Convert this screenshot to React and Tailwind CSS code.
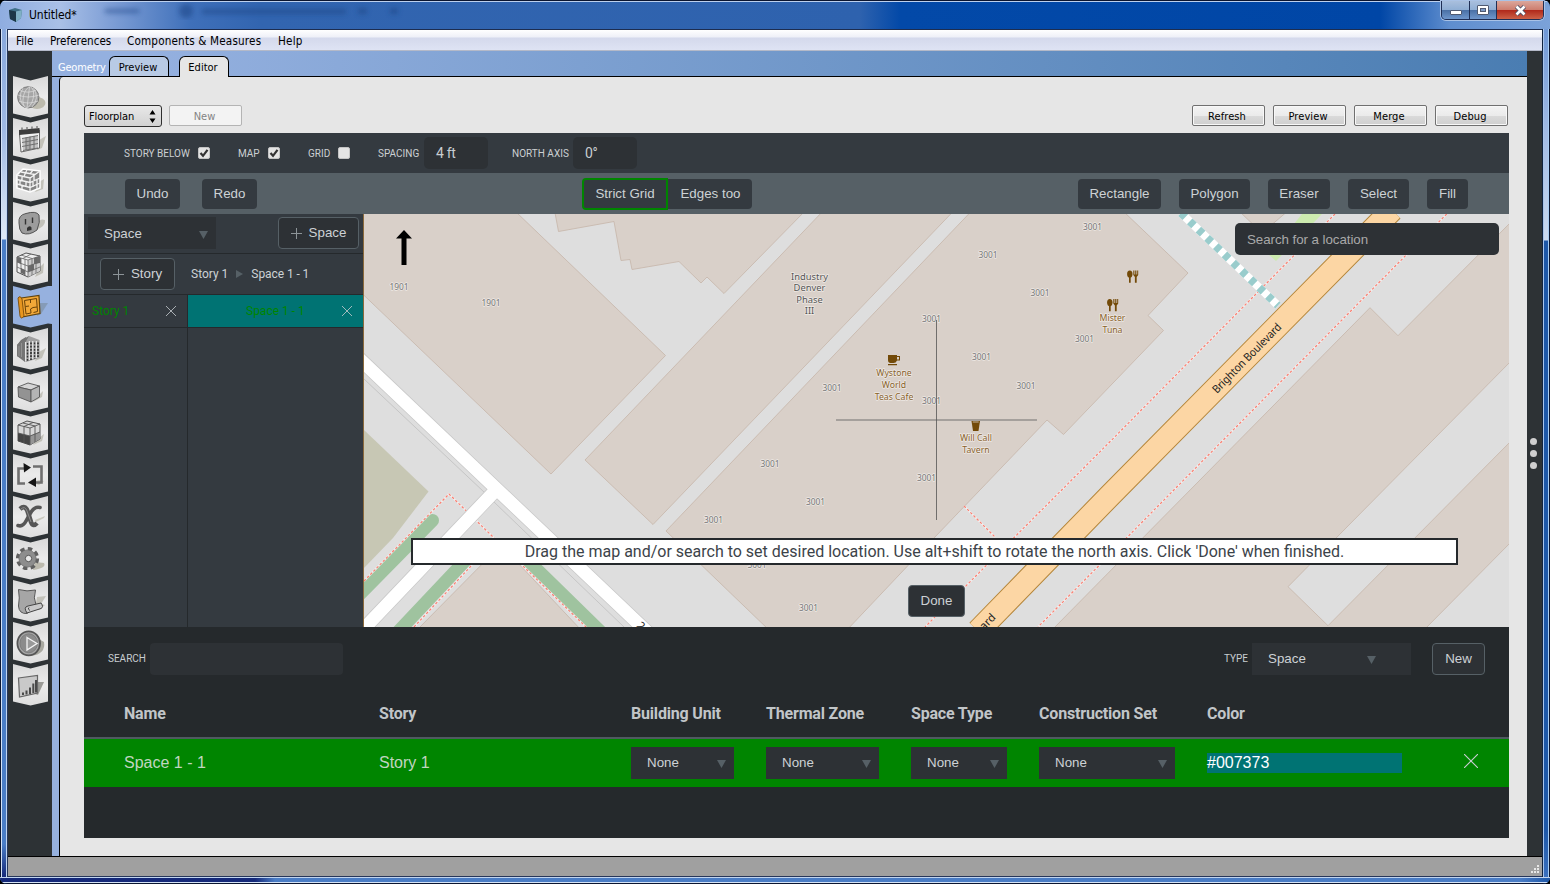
import React from "react";

const ARIAL = "font-['Liberation_Sans',Arial,sans-serif]";
const ROBOTO = "font-[Roboto,sans-serif]";

/* ---------- side bar ---------- */

const Shade = ({ d = "M18 31 L33 22 L31 30 L22 34 Z" }) => <path d={d} fill="#b9b8ae" opacity=".8" />;

const icons = [
  <g key="site">
    <ellipse cx="24" cy="27" rx="8.5" ry="6" fill="#bdbbae" />
    <circle cx="15.3" cy="21.3" r="10.6" fill="#a6a6a6" stroke="#777" />
    <g fill="none" stroke="#dedede" strokeWidth=".7">
      <ellipse cx="15.3" cy="21.3" rx="5" ry="10.5" transform="rotate(12 15.3 21.3)" />
      <path d="M16.5 11 L14 31.8 M5 19 Q15 23 26 19 M7 14.5 Q15 18 23.5 14 M6 25 Q15 29 25 25 M10 12 Q4 22 11 30.5 M20.5 12 Q27 22 19 31" />
    </g>
  </g>,
  <g key="schedules">
    <Shade d="M26 22 L33 18 L29 30 L24 32 Z" />
    <path d="M6.5 16 L26.5 12 L26.5 30 L8 34 Z" fill="#f1f1f1" stroke="#666" />
    <path d="M6 12 L26.5 10 V15 L6 17 Z" fill="#3d3d3d" />
    <path d="M9 12 V9.500 M14 11.500 V9 M19 11 V8.500 M24 10.500 V8" stroke="#777" strokeWidth="1.400" />
    <path d="M9 20.500 L25 17.500 V30 L10 32.500 Z" fill="#c4c4c4" />
    <path d="M9 20.500 L25 17.500 M9 24.500 L25 21.500 M9 28.500 L25 25.500 M10 32.500 L25 30 M13 19.500 V32 M17 18.500 V31.500 M21 18 V31" stroke="#666" strokeWidth=".9" />
    <path d="M13 20 L17 19 V31.500 L13 32 Z" fill="#777" opacity=".35" />
  </g>,
  <g key="constructions">
    <Shade d="M26 22 L31 19 L30 29 L22 32 Z" />
    <path d="M4 15 L10 9 L27 11 V28 L17 32 L4 28 Z" fill="#858585" stroke="#fff" strokeWidth="1.500" />
    <path d="M4 15 L17 18 L27 11 M17 18 V32 M4 19.500 L17 22.500 L27 18 M4 24 L17 27.500 L27 23 M9 16 V20 M13 21.500 V26 M7 20 V25 M9 25 V29 M21 15 V20 M24 19 V24 M20 22 V27 M24 25 V29 M8 12 L22 14.500 M14 9.500 L11 16.500 M20 10 L17 14" fill="none" stroke="#f4f4f4" strokeWidth="1.300" />
  </g>,
  <g key="loads">
    <Shade d="M23 28 Q33 24 32 18 Q27 16 25 21 Z" />
    <path d="M6 21 Q5 13 13 11.500 Q23 8.500 26 13 Q27.500 20 24 28 Q16 34 9 31 Q6 28 6 21 Z" fill="#9c9c9c" stroke="#555" />
    <path d="M12.500 17 V22.500 M19.500 15.500 V21" stroke="#333" strokeWidth="1.400" />
    <path d="M14 29 V26 Q16.500 23 18.500 25.500 V28 Z" fill="#333" />
  </g>,
  <g key="spacetypes">
    <Shade d="M26 24 L31 19 L30 29 L22 33 Z" />
    <path d="M4 13 L13 9 L27 12 V27 L15 33 L4 28 Z" fill="#eee" stroke="#555" />
    <path d="M15 16 L27 12 V27 L15 33 Z" fill="#ccc" />
    <path d="M15 22 L21 20 V26 L15 28 Z M21 14 L27 12 V19 L21 20 Z M4 13 L8 14 V20 L4 18 Z M8 24 L12 26 V31 L8 29 Z" fill="#6a6a6a" />
    <path d="M4 13 L15 16 L27 12 M15 16 V33 M4 18 L15 22 L27 18 M4 23 L15 28 L27 23 M8 14 V30 M12 15 V32 M19 15 V31 M23 13 V29 M8 11 L19 14.500 M18 10 L10 14.500" fill="none" stroke="#666" strokeWidth=".8" />
  </g>,
  <g key="geometry">
    <path d="M25 17 L35 17 L28 28 L24 30 Z" fill="#8196ae" opacity=".8" />
    <path d="M8 12 L26 9.500 L27 27.500 L9 31 Z" fill="#f2a838" stroke="#5f430f" strokeWidth="1.200" />
    <path d="M5 12 Q7 9 9 13 L11 30 Q8 34 7 30 Z" fill="#e8961f" stroke="#7a4b08" strokeWidth=".9" />
    <path d="M11.500 14.500 L23.500 12.500 L24.500 25.500 L20.500 26.500 M18 27 L13 28 L11.500 14.500 M12.500 20.500 L16 20 M17.500 13.500 V17 M18 27 L17.500 23 L20 21.500 L24 21" fill="none" stroke="#6a4208" strokeWidth="1" />
  </g>,
  <g key="facility">
    <Shade d="M26 24 L33 20 L29 30 L22 33 Z" />
    <path d="M4 17 L8 12 L13 9 L14 33 L4 28 Z" fill="#6f6f6f" />
    <path d="M9 13 L16 8 L26.500 12 V30 L13 34 L10 31 Z" fill="#a0a0a0" />
    <path d="M4 17 L9 12 L16 8 L12 15 V34 L4 28 Z" fill="#757575" />
    <path d="M14.500 15 V33 M18 14.500 V32 M21.500 14.500 V31 M25 14.500 V30" stroke="#333" strokeWidth="1.700" strokeDasharray="1.800 1.400" />
    <path d="M12.700 14 V33 M16.300 13 V32 M19.800 13 V31 M23.300 13 V30" stroke="#f3f3f3" strokeWidth="1.100" />
    <path d="M6 18 V28 M8.500 15 V29" stroke="#999" strokeWidth=".8" />
  </g>,
  <g key="spaces">
    <Shade d="M24 27 L30 21 L29 27 L20 32 Z" />
    <path d="M5 17 L15 13 L26.500 16 L18 20 Z" fill="#d5d5d5" stroke="#555" strokeWidth=".9" />
    <path d="M5 17 L18 20 V32 L5.500 27 Z" fill="#939393" stroke="#555" strokeWidth=".9" />
    <path d="M18 20 L26.500 16 V27 L18 32 Z" fill="#b4b4b4" stroke="#555" strokeWidth=".9" />
  </g>,
  <g key="zones">
    <Shade d="M26 26 L31 22 L29 29 L20 33 Z" />
    <path d="M5 13 L14 9 L27 12 V27 L17 33 L5 29 Z" fill="#d8d8d8" stroke="#555" />
    <path d="M5 21 L17 24 V33 L5 29 Z" fill="#444" />
    <path d="M17 24 L27 20 V27 L17 33 Z" fill="#969696" />
    <path d="M5 13 L17 16 L27 12 M17 16 V33 M5 21 L17 24 L27 20 M11 14.500 V31 M22 14 V30 M10 11 L22 14 M20 10.500 L11 14.500" fill="none" stroke="#555" strokeWidth=".9" />
  </g>,
  <g key="hvac">
    <path d="M12 30 L26 26 L31 27 L26 31 L20 29 Z" fill="#c6c5bc" />
    <g fill="none" stroke="#6f6f6f" strokeWidth="2.600">
      <path d="M11 14.500 H5.500 V29.500 H12" />
      <path d="M20 12.500 H28.500 V28.500 H22" />
    </g>
    <path d="M10.500 9 L18 13.500 L11 18.500 Z M23 23.500 L15 28.500 L23 33 Z" fill="#151515" />
  </g>,
  <g key="variables">
    <path d="M22 24 L32 20 L31 22 L23 26 Z" fill="#c9c8be" />
    <path d="M7 13 Q12 8.500 14.500 15 L18 26 Q20 31.500 24 27" fill="none" stroke="#565656" strokeWidth="4.600" />
    <path d="M27 11.500 Q21 10 17 18 L13 25 Q10 31 5 29.500" fill="none" stroke="#565656" strokeWidth="3.600" strokeLinecap="round" />
    <path d="M8 13 Q12 9.500 14 15 L18 26" fill="none" stroke="#8b8b8b" strokeWidth="1" />
  </g>,
  <g key="settings">
    <path d="M20 32 Q34 30 31 25 L22 24 Z" fill="#bcbaae" />
    <circle cx="14.500" cy="20.500" r="9.800" fill="none" stroke="#5f5f5f" strokeWidth="3.600" strokeDasharray="4.400 3.300" />
    <circle cx="14.500" cy="20.500" r="8.600" fill="#8d8d8d" stroke="#6c6c6c" strokeWidth=".8" />
    <circle cx="15.500" cy="20.500" r="3.200" fill="#e8e8e8" stroke="#555" />
  </g>,
  <g key="scripts">
    <Shade d="M24 17 L33 16 L28 24 L32 25 L26 30 L22 29 Z" />
    <path d="M5.500 9.500 Q14 12 22.500 10 Q20 18 23 25 L14 33.500 Q6 34 5.500 26 Q7 18 5.500 9.500 Z" fill="#a6a6a6" stroke="#555" />
    <path d="M14 33 Q10 27 15 26 L28 23 Q31 27 28 28.500 Z" fill="#c9c9c9" stroke="#444" />
    <path d="M17 30.500 Q14 29 16 27.500" fill="none" stroke="#444" />
  </g>,
  <g key="run">
    <path d="M18 34 Q33 32 31 20 L24 16 Z" fill="#a8a8a0" />
    <ellipse cx="15.700" cy="21.300" rx="11.300" ry="12" fill="#a5a5a5" stroke="#555" strokeWidth="1.800" />
    <ellipse cx="15.700" cy="21.300" rx="8.800" ry="9.500" fill="#8c8c8c" stroke="#777" strokeWidth=".8" />
    <path d="M14 15.500 L24 21.500 L14 28 Z" fill="#9a9a9a" stroke="#f5f5f5" strokeWidth="1.300" />
  </g>,
  <g key="results">
    <path d="M25 18 L31 18 L25 31 L22 30 Z" fill="#9a9a96" />
    <path d="M5.500 14 L24.500 11.500 V29 L6.500 33 Z" fill="#c9c9c9" stroke="#666" strokeWidth="1.200" />
    <path d="M10 28.500 V31 M13.500 26.500 V30.500 M17 23.500 V30 M20.300 19.500 V29 M23 16 V28.500" stroke="#4a4a4a" strokeWidth="2" />
  </g>,
];

function SideBar() {
  return (
    <nav className="flex w-[44px] shrink-0 flex-col bg-[#2d3235] pt-[25px]">
      {icons.map((icon, i) => (
        <svg key={i} className="block h-[42px] w-[44px] overflow-visible" viewBox="-5 0 44 42">
          <defs>
            <linearGradient id="tile" x1="0" x2="0" y1="0" y2="1">
              <stop offset="0" stopColor="#d9d9d9" />
              <stop offset=".5" stopColor="#ebebeb" />
              <stop offset="1" stopColor="#dedede" />
            </linearGradient>
          </defs>
          {i === 5 ? (
            <path d="M0 0 L17.500 4.500 L35 0 L39 0 V38 L35 37.500 L17.500 41.500 L0 37.500 Z" fill="#96b1df" />
          ) : (
            <path d="M0 0 L17.500 4.500 L35 0 V37.500 L17.500 41.500 L0 37.500 Z" fill="url(#tile)" />
          )}
          {icon}
        </svg>
      ))}
    </nav>
  );
}

/* ---------- window chrome ---------- */

function TitleBar() {
  return (
    <header className="flex h-[29px] shrink-0 items-start justify-between border-t border-[#0b1530] bg-[linear-gradient(90deg,#8fade0_0px,#a9c0e7_60px,#7f9fd6_110px,#3f70ba_190px,#3265b0_260px,#2e62ae_860px,#0349a8_900px,#0046a6_1380px,#5f8ecf_1450px,#7ba2d9_1550px)] shadow-[inset_0_1px_0_#bcd0ee]">
      <div className="flex h-[27px] items-center pl-[9px]">
        <svg className="h-[14px] w-[14px]" viewBox="0 0 14 14">
          <path d="M0 2 L6 0 L13 2 L12 10 L7 14 L1 11 Z" fill="#3f6f86" />
          <path d="M0 2 L7 3.500 V14 L1 11 Z" fill="#1d3848" />
          <path d="M7 3.500 L13 2 L12 10 L7 14 Z" fill="#7fb0c4" />
        </svg>
        <span className="ml-[6px] text-[12px] tracking-[-0.05px] text-black">Untitled*</span>
        <svg className="h-[27px] w-[820px]" viewBox="77 0 820 27">
          <defs>
            <filter id="haze"><feGaussianBlur stdDeviation="2.500" /></filter>
          </defs>
          <g filter="url(#haze)" fill="#1d4585" opacity=".55">
            <rect x="105" y="8" width="34" height="4" />
            <circle cx="186" cy="10" r="7" />
            <rect x="202" y="8" width="144" height="5" />
            <rect x="358" y="7" width="9" height="6" />
            <rect x="390" y="7" width="8" height="6" />
          </g>
        </svg>
      </div>
      <div className="mr-[6px] flex h-[19px] overflow-hidden rounded-b-[5px] border border-t-0 border-[#1f2f55] shadow-[0_0_0_1px_#a9c2e6]">
        <div className="flex w-[28px] items-center justify-center border-r border-[#1f2f55] bg-[linear-gradient(#a9bfdd_0,#8faed4_50%,#4a70a5_51%,#6f97cc_100%)]">
          <div className="mt-[5px] h-[5px] w-[12px] rounded-[1px] border border-[#505a70] bg-white" />
        </div>
        <div className="flex w-[27px] items-center justify-center border-r border-[#1f2f55] bg-[linear-gradient(#a9bfdd_0,#8faed4_50%,#4a70a5_51%,#6f97cc_100%)]">
          <div className="flex h-[10px] w-[12px] items-center justify-center rounded-[1px] border border-[#505a70] bg-white">
            <div className="h-[4px] w-[6px] border border-[#505a70] bg-[#7d9bc8]" />
          </div>
        </div>
        <div className="flex w-[46px] items-center justify-center bg-[linear-gradient(#dba79c_0,#cd7c6d_50%,#b0281a_51%,#cc6147_100%)]">
          <svg className="h-[11px] w-[13px]" viewBox="0 0 13 11">
            <path d="M2.500 1.500 L10.500 9.500 M10.500 1.500 L2.500 9.500" stroke="#4c4f66" strokeWidth="4.400" />
            <path d="M2.500 1.500 L10.500 9.500 M10.500 1.500 L2.500 9.500" stroke="#fff" strokeWidth="2.600" />
          </svg>
        </div>
      </div>
    </header>
  );
}

function MenuBar() {
  return (
    <div className="flex h-[22px] shrink-0 items-center border-t border-[#1d2d50] border-b border-b-[#b4b9c8] bg-[linear-gradient(#ffffff_0,#eef0f8_7px,#d4d9ec_8px,#dfe4f4_21px)] pl-[8px] pt-[3px] text-[11.6px] text-black">
      <span className="w-[34px]">File</span>
      <span className="w-[77px]">Preferences</span>
      <span className="w-[151px] tracking-[0.18px]">Components &amp; Measures</span>
      <span className="tracking-[0.2px]">Help</span>
    </div>
  );
}

function TabBar() {
  return (
    <div className="flex h-[26px] shrink-0 items-end border-b border-black bg-[linear-gradient(90deg,#94b0df_0px,#94b0df_100px,#4a7db2_1475px)] pl-[6px] text-[11px]">
      <span className="w-[51px] tracking-[-0.2px] text-white">Geometry</span>
      <div className="flex h-[20px] w-[60px] items-center justify-center rounded-t-[6px] border border-b-0 border-black bg-[#b8cae4] pr-[2px] pt-[3px] text-black">
        Preview
      </div>
      <div className="-mb-px ml-[10px] flex h-[21px] w-[50px] items-center justify-center rounded-t-[6px] border border-b-0 border-black bg-[#e6e6e6] pr-[2px] pt-[3px] text-black">
        Editor
      </div>
    </div>
  );
}

const NativeButton = ({ children, disabled }) => (
  <button
    className={
      disabled
        ? "h-[21px] w-[73px] rounded-[2px] border border-[#b4b4b4] bg-[#f3f3f3] pr-[2px] pt-[3px] text-[11px] text-[#838383]"
        : "h-[21px] w-[73px] rounded-[2px] border border-[#707070] bg-[linear-gradient(#f3f3f3_0,#ebebeb_50%,#dadada_51%,#cfcfcf_100%)] pr-[3px] pt-[3px] text-[11px] tracking-[0.1px] text-black shadow-[inset_0_0_0_1px_#f8f8f8]"
    }
  >
    {children}
  </button>
);

function ActionBar() {
  return (
    <div className="flex h-[56px] shrink-0 items-start pl-[24px] pr-[19px] pt-[28px]">
      <div className="mr-[7px] flex h-[22px] w-[78px] items-center justify-between rounded-[3px] border border-[#2f2f2f] bg-[linear-gradient(#e8e8e8,#d2d2d2)] pl-[4px] pr-[5px] text-[11px] text-black">
        <span className="pt-[3px] tracking-[-0.1px]">Floorplan</span>
        <svg className="h-[13px] w-[7px]" viewBox="0 0 7 13">
          <path d="M3.500 0 L6.500 4.500 H.5 Z M3.500 13 L6.500 8.500 H.5 Z" />
        </svg>
      </div>
      <NativeButton disabled>New</NativeButton>
      <div className="ml-auto flex gap-[8px]">
        <NativeButton>Refresh</NativeButton>
        <NativeButton>Preview</NativeButton>
        <NativeButton>Merge</NativeButton>
        <NativeButton>Debug</NativeButton>
      </div>
    </div>
  );
}

/* ---------- floor plan editor ---------- */

const Check = ({ on }) => (
  <svg className="h-[12px] w-[12px]" viewBox="0 0 12 12">
    <rect x=".5" y=".5" width="11" height="11" rx="1.500" fill="#e4e4e4" stroke="#c4c4c4" />
    {on && <path d="M2.500 6 L5 8.800 L9.500 2.800" fill="none" stroke="#333" strokeWidth="2.200" />}
  </svg>
);

const Toggle = ({ label, on, className }) => (
  <label className={`flex items-center ${className}`}>
    <span>{label}</span>
    <Check on={on} />
  </label>
);

const Field = ({ children, className = "" }) => (
  <div className={`flex h-[32px] items-center rounded-[5px] bg-[#2d3135] text-[#c8cdd1] ${className}`}>{children}</div>
);

function SettingsBar() {
  return (
    <div className={`flex h-[40px] shrink-0 items-center bg-[#343a40] pl-[40px] text-[10px] text-[#ccd0d3] ${ROBOTO}`}>
      <Toggle label="STORY BELOW" on className="mr-[28px] w-[86px] justify-between" />
      <Toggle label="MAP" on className="mr-[28px] w-[42px] justify-between" />
      <Toggle label="GRID" className="mr-[28px] w-[42px] justify-between" />
      <span className="w-[46px]">SPACING</span>
      <Field className="mr-[24px] w-[64px] pl-[12px] text-[14px] tracking-[-0.3px]">4 ft</Field>
      <span className="w-[61px]">NORTH AXIS</span>
      <Field className="w-[64px] pl-[12px] text-[14px] tracking-[-0.3px]">0°</Field>
    </div>
  );
}

const ToolButton = ({ children, className }) => (
  <button className={`h-[30px] rounded-[4px] bg-[#343a40] text-[#cdd2d5] ${className}`}>{children}</button>
);

function ToolBar() {
  return (
    <div className={`flex h-[41px] shrink-0 items-center bg-[#566066] pl-[41px] pr-[41px] text-[13.33px] ${ARIAL}`}>
      <ToolButton className="mr-[22px] w-[55px]">Undo</ToolButton>
      <ToolButton className="mr-[325px] w-[55px]">Redo</ToolButton>
      <button className="h-[32px] w-[86px] rounded-l-[4px] border-2 border-[#008500] bg-[#343a40] text-[#cdd2d5]">Strict Grid</button>
      <button className="h-[30px] w-[84px] rounded-r-[4px] bg-[#343a40] pl-px text-[#cdd2d5]">Edges too</button>
      <div className="ml-auto flex gap-[18px]">
        <ToolButton className="w-[83px]">Rectangle</ToolButton>
        <ToolButton className="w-[71px]">Polygon</ToolButton>
        <ToolButton className="w-[62px]">Eraser</ToolButton>
        <ToolButton className="w-[61px]">Select</ToolButton>
        <ToolButton className="w-[41px]">Fill</ToolButton>
      </div>
    </div>
  );
}

const Down = () => (
  <svg className="mt-[2px] h-[8px] w-[9px]" viewBox="0 0 9 8">
    <path d="M0 0 H9 L4.500 8 Z" fill="#566066" />
  </svg>
);

const Cross = ({ className = "h-[10px] w-[10px]" }) => (
  <svg className={className} viewBox="0 0 10 10">
    <path d="M0 0 L10 10 M10 0 L0 10" stroke="#c8cdd1" strokeWidth=".8" />
  </svg>
);

const Plus = () => (
  <svg className="mt-px h-[11px] w-[11px]" viewBox="0 0 11 11">
    <path d="M5.500 0 V11 M0 5.500 H11" stroke="#8d9498" />
  </svg>
);

const OutlineButton = ({ children, className }) => (
  <button className={`flex h-[32px] items-center justify-center rounded-[4px] border border-[#566066] bg-[#2d3135] text-[13.33px] text-[#cdd2d5] ${ARIAL} ${className}`}>
    {children}
  </button>
);

const Select = ({ value, className }) => (
  <div className={`flex h-[32px] items-center justify-between bg-[#2d3135] pl-[16px] pr-[8px] text-[#cdd2d5] ${ARIAL} ${className}`}>
    <span>{value}</span>
    <Down />
  </div>
);

function Navigation() {
  return (
    <aside className="flex w-[279px] shrink-0 flex-col bg-[#343a40]">
      <div className="flex h-[40px] items-start justify-between border-b border-[#25292c] px-[4px] pt-[3px]">
        <Select value="Space" className="w-[128px] pt-px text-[13.33px]" />
        <OutlineButton className="w-[81px] gap-[7px] pb-px"><Plus />Space</OutlineButton>
      </div>
      <div className={`flex h-[41px] items-center border-b border-[#25292c] pl-[16px] text-[12px] text-[#cdd2d5] ${ROBOTO}`}>
        <OutlineButton className="mr-[16px] w-[75px] gap-[7px]"><Plus />Story</OutlineButton>
        <span>Story 1</span>
        <svg className="ml-[8px] mr-[8px] h-[8px] w-[7px]" viewBox="0 0 7 8"><path d="M0 0 L7 4 L0 8 Z" fill="#566066" /></svg>
        <span className="tracking-[-0.08px]">Space 1 - 1</span>
      </div>
      <div className={`flex flex-1 text-[12px] text-[#008500] ${ROBOTO}`}>
        <div className="w-[104px] border-r border-[#25292c]">
          <div className="flex h-[33px] items-center justify-between border-b border-[#25292c] pl-[8px] pr-[11px]">
            <span>Story 1</span>
            <Cross />
          </div>
        </div>
        <div className="w-[175px]">
          <div className="flex h-[33px] items-center justify-between border-b border-[#25292c] bg-[#007373] pl-[58px] pr-[11px]">
            <span>Space 1 - 1</span>
            <Cross />
          </div>
        </div>
      </div>
    </aside>
  );
}

const numbers = [
  [399, 289.500, "1901"], [491, 305.500, "1901"], [1092.500, 229.500, "3001"], [988, 257.500, "3001"],
  [1040, 295.500, "3001"], [931.500, 321.500, "3001"], [1084.500, 342, "3001"], [981.500, 359.500, "3001"],
  [1026, 388.500, "3001"], [832, 391, "3001"], [931.500, 404, "3001"], [770, 467, "3001"],
  [926.500, 480.500, "3001"], [815.500, 504.500, "3001"], [713.500, 523, "3001"], [757, 568, "3001"],
  [808.500, 611, "3001"],
];

const Fork = ({ x, y }) => (
  <g transform={`translate(${x} ${y})`} fill="#734a08">
    <ellipse cx="2.800" cy="3.600" rx="2.700" ry="3.600" />
    <path d="M2 6 H3.700 V12.300 H2 Z M6.300 0 H7.400 V4 H8.200 V0 H9.400 V4 H10.200 V0 H11.200 V4.500 L9.700 6.500 V12.300 H7.900 V6.500 L6.300 4.500 Z" />
  </g>
);

function MapView() {
  return (
    <svg className="block h-[413px] w-[1146px]" viewBox="363 214 1146 413">
      <rect x="363" y="214" width="1146" height="413" fill="#dedede" />
      <path d="M364 430 L428.500 491.500 L393 538 L364 568 Z" fill="#c7c7b4" />
      <path d="M1302 214 H1322 L1276 261 L1269 255 Z" fill="#cdebb0" />
      <g fill="#d9d0c9" stroke="#c8b9ae" strokeWidth=".9">
        <path d="M360 210 H514 L665.500 355.500 L551 474 L360 291.500 Z" />
        <path d="M554.500 210 L558.500 231.500 L614 221.500 L621 260.500 L630 259.500 L632 269.500 L679 261.500 L701 283 L707 277 L724 293.500 L806 210 Z" />
        <path d="M824 210 L585 460 L653 524.500 L954.500 210 Z" />
        <path d="M972.500 210 L666 531 L770 631 H846 L935 537 L1047 420 L1063.500 434.500 L1163.500 330.500 L1148 315.500 L1188 273 L1122 210 Z" />
        <path d="M1238 210 L1262 233 L1289 210 Z" />
        <path d="M416 631 L501 545 L582 631 Z" />
        <path d="M1513 220 L1398 335.700 L1370 307.700 L1051 631 H1423 L1513 540 Z" />
      </g>
      <path d="M1513 359 L1288 586.700 L1328 625.700 L1513 439 Z" fill="#dedede" stroke="#c8b9ae" strokeWidth=".9" />
      <g fill="none" stroke="#c6c6c6">
        <path d="M364 379 L484 492 M494 502 L624 627" />
      </g>
      <g stroke="#9fc39f" strokeWidth="13" strokeLinecap="round">
        <path d="M355 599 L432.500 520.500 M396 634 L463 563 L480 546 M520 553 L606 637" fill="none" />
      </g>
      <g fill="none" stroke="#f4f0f0" strokeWidth="2" opacity=".8">
        <path d="M364 581 L449 494 L493 537 L586 627 M414 627 L472 565 M1335 214 L1111.700 440 L1014 537.700 L925 627 M964 506 L995 537 M1446.700 214 L1126.700 537.700 L1038 627" />
      </g>
      <g fill="none" stroke="#fa8072" strokeWidth="1.200" strokeDasharray="2.500 2">
        <path d="M364 581 L449 494 L493 537 L586 627 M414 627 L472 565 M1335 214 L1111.700 440 L1014 537.700 L925 627 M964 506 L995 537 M1446.700 214 L1126.700 537.700 L1038 627" />
      </g>
      <path d="M355 354.500 L652 636.500 M492 494 L355 638" stroke="#c9c9c9" strokeWidth="14.500" fill="none" />
      <path d="M355 354.500 L652 636.500 M495 491 L355 638" stroke="#fff" strokeWidth="13" fill="none" />
      <path d="M1181 211 L1278 303.500" stroke="#fff" strokeWidth="8" transform="translate(0 2)" />
      <path d="M1181 211 L1278 303.500" stroke="#99cccc" strokeWidth="8" strokeDasharray="6 6" transform="translate(0 2)" />
      <path d="M1392 210 L1110 495.500 L978 631" fill="none" stroke="#b5863a" strokeWidth="24" />
      <path d="M1392 210 L1110 495.500 L978 631" fill="none" stroke="#fcd6a4" strokeWidth="22" />
      <g className="font-['Noto_Sans',sans-serif]" textAnchor="middle" stroke="#efeae6" strokeWidth="1.400" paintOrder="stroke" strokeLinejoin="round">
        <g fill="#757575" fontSize="8.400">
          {numbers.map(([x, y, n]) => <text key={`${x}-${y}`} x={x} y={y}>{n}</text>)}
        </g>
        <g fill="#555" fontSize="9.400">
          <text x="809.500" y="279.500">Industry</text>
          <text x="809.500" y="291">Denver</text>
          <text x="809.500" y="302.500">Phase</text>
          <text x="809.500" y="314">III</text>
        </g>
        <g fill="#87612a" fontSize="8.700">
          <text x="894" y="376">Wystone</text>
          <text x="894" y="388">World</text>
          <text x="894" y="400">Teas Cafe</text>
          <text x="976" y="441">Will Call</text>
          <text x="976" y="453">Tavern</text>
          <text x="1112.500" y="320.500">Mister</text>
          <text x="1112.500" y="332.500">Tuna</text>
        </g>
      </g>
      <Fork x="1127" y="270.500" />
      <Fork x="1107" y="299" />
      <path d="M888 355 H897 V356 H900 V360.500 H897 Q896 363 893.500 363 H890.500 Q888 363 888 360 Z M897 357 V359.500 H899 V357 Z M888 364 H897 V365.300 H888 Z" fill="#734a08" fillRule="evenodd" />
      <path d="M971.500 421 H980 L978.500 431 H973 Z" fill="#734a08" />
      <path d="M972.800 422 H978.700" stroke="#d9d0c9" strokeWidth=".8" />
      <g className="font-['Noto_Sans',sans-serif]" fontSize="11.300" fill="#222">
        <text transform="translate(1217 394) rotate(-45.500)" textLength="93" lengthAdjust="spacingAndGlyphs">Brighton Boulevard</text>
        <text transform="translate(996.500 618) rotate(-45.500)" textAnchor="end">ard</text>
        <text transform="translate(636 626.500) rotate(43)">2</text>
      </g>
      <path d="M836 420 H1037" stroke="#666" strokeOpacity=".6" strokeWidth="1.500" />
      <path d="M936.500 320 V520" stroke="#555" strokeOpacity=".8" />
      <path d="M404 230 L412 238.500 H406.500 V265 H401.500 V238.500 H396 Z" fill="#000" />
      <path d="M363.500 214 V627" stroke="#8a6a3c" />
    </svg>
  );
}

function MapPane() {
  return (
    <section className="relative w-[1146px] shrink-0 overflow-hidden">
      <MapView />
      <div className={`absolute left-[872px] top-[9px] flex h-[32px] w-[264px] items-center rounded-[5px] bg-[#2d3135] pl-[12px] pt-px text-[13.33px] tracking-[-0.06px] text-[#a9a9a9] ${ARIAL}`}>
        Search for a location
      </div>
      <div className={`absolute left-[48px] top-[324px] flex h-[27px] w-[1047px] items-center justify-center border-2 border-[#25292c] bg-white text-[16px] text-[#3c4349] ${ROBOTO}`}>
        Drag the map and/or search to set desired location. Use alt+shift to rotate the north axis. Click 'Done' when finished.
      </div>
      <OutlineButton className="absolute left-[545px] top-[371px] w-[57px]">Done</OutlineButton>
    </section>
  );
}

const columns = "grid grid-cols-[255px_252px_135px_145px_128px_168px_257px_1fr] pl-[40px]";

function Library() {
  return (
    <section className="flex flex-1 flex-col bg-[#25292c]">
      <div className={`flex h-[64px] items-center pl-[24px] pr-[24px] text-[10px] text-[#c8cdd1] ${ROBOTO}`}>
        <span className="w-[42px] pb-[2px]">SEARCH</span>
        <div className="h-[32px] w-[193px] rounded-[4px] bg-[#2d3135]" />
        <span className="ml-auto w-[28px] pb-[2px]">TYPE</span>
        <Select value="Space" className="mr-[21px] w-[159px] pr-[35px] text-[13.33px]" />
        <OutlineButton className="w-[53px]">New</OutlineButton>
      </div>
      <div className={`${columns} h-[48px] items-center border-b-2 border-[#4f5a60] text-[16px] font-bold tracking-[-0.18px] text-[#c1c5c8] ${ROBOTO}`}>
        <span>Name</span>
        <span>Story</span>
        <span>Building Unit</span>
        <span>Thermal Zone</span>
        <span>Space Type</span>
        <span>Construction Set</span>
        <span>Color</span>
      </div>
      <div className={`${columns} h-[48px] items-center bg-[#008500] text-[16px] text-[#c1d5c1] ${ARIAL}`}>
        <span>Space 1 - 1</span>
        <span>Story 1</span>
        <Select value="None" className="w-[103px] text-[13.33px]" />
        <Select value="None" className="w-[113px] text-[13.33px]" />
        <Select value="None" className="w-[96px] text-[13.33px]" />
        <Select value="None" className="w-[136px] text-[13.33px]" />
        <div className="flex h-[20px] w-[195px] items-center bg-[#007373] text-white">#007373</div>
        <Cross className="mb-[4px] h-[14px] w-[14px]" />
      </div>
    </section>
  );
}

function Editor() {
  return (
    <div className="mx-[24px] mr-[18px] flex h-[705px] flex-col">
      <SettingsBar />
      <ToolBar />
      <div className="flex h-[413px] shrink-0">
        <Navigation />
        <MapPane />
      </div>
      <Library />
    </div>
  );
}

export default function App() {
  return (
    <div className="flex h-[884px] w-[1550px] flex-col overflow-hidden bg-black font-['DejaVu_Sans_Condensed','DejaVu_Sans',sans-serif] leading-normal">
      <div className="flex h-[884px] w-[1550px] flex-col overflow-hidden rounded-[7px] bg-[#4a7dc6]">
        <TitleBar />
        <div className="flex h-[848px] shrink-0">
          <div className="w-[8px] shrink-0 border-l border-[#0b1530] bg-[linear-gradient(#88a8dd_0,#9fb9e4_100px,#e0e9f6_210px,#4a7dc6_211px,#4a7dc6_815px,#15297a_848px)] shadow-[inset_1px_0_0_#d5e3f6,inset_-1px_0_0_#26365a,inset_-2px_0_0_#c0d4ef]" />
          <div className="flex w-[1534px] shrink-0 flex-col">
            <MenuBar />
            <div className="flex h-[805px] shrink-0">
              <SideBar />
              <main className="flex w-[1475px] shrink-0 flex-col bg-[#96b1df]">
                <TabBar />
                <div className="ml-[7px] flex flex-1 flex-col rounded-tl-[4px] border-l border-black bg-[#e6e6e6]">
                  <ActionBar />
                  <Editor />
                </div>
              </main>
              <div className="flex w-[15px] flex-col items-start justify-center gap-[5px] bg-[#2d3235] pl-[3px]">
                <i className="h-[7px] w-[7px] rounded-full bg-[#cfcfcf]" />
                <i className="h-[7px] w-[7px] rounded-full bg-[#cfcfcf]" />
                <i className="h-[7px] w-[7px] rounded-full bg-[#cfcfcf]" />
              </div>
            </div>
            <div className="flex h-[21px] items-end justify-end border-y border-black border-b-[#26365a] bg-[#a0a0a0] p-[3px]">
              <svg className="h-[8px] w-[8px]" viewBox="0 0 8 8">
                <path d="M6 0h2v2H6z M3 3h2v2H3z M6 3h2v2H6z M0 6h2v2H0z M3 6h2v2H3z M6 6h2v2H6z" fill="#e8e8e8" />
              </svg>
            </div>
          </div>
          <div className="w-[8px] shrink-0 border-r border-[#0b1530] bg-[linear-gradient(#6f98d6_0,#9fb9e4_100px,#cbdaf0_211px,#1d57a8_212px,#1d57a8_800px,#3a70bf_848px)] shadow-[inset_-1px_0_0_#a9cdf2,inset_1px_0_0_#10233f,inset_2px_0_0_#a9c4ea]" />
        </div>
        <footer className="h-[7px] border-b border-[#0b1530] bg-[linear-gradient(90deg,#15297a_0px,#15297a_255px,#4a7dc6_275px,#4a7dc6_1520px,#1d57a8_1550px)] shadow-[inset_0_1px_0_#c0d4ef,inset_0_-1px_0_#d5e3f6]" />
      </div>
    </div>
  );
}
